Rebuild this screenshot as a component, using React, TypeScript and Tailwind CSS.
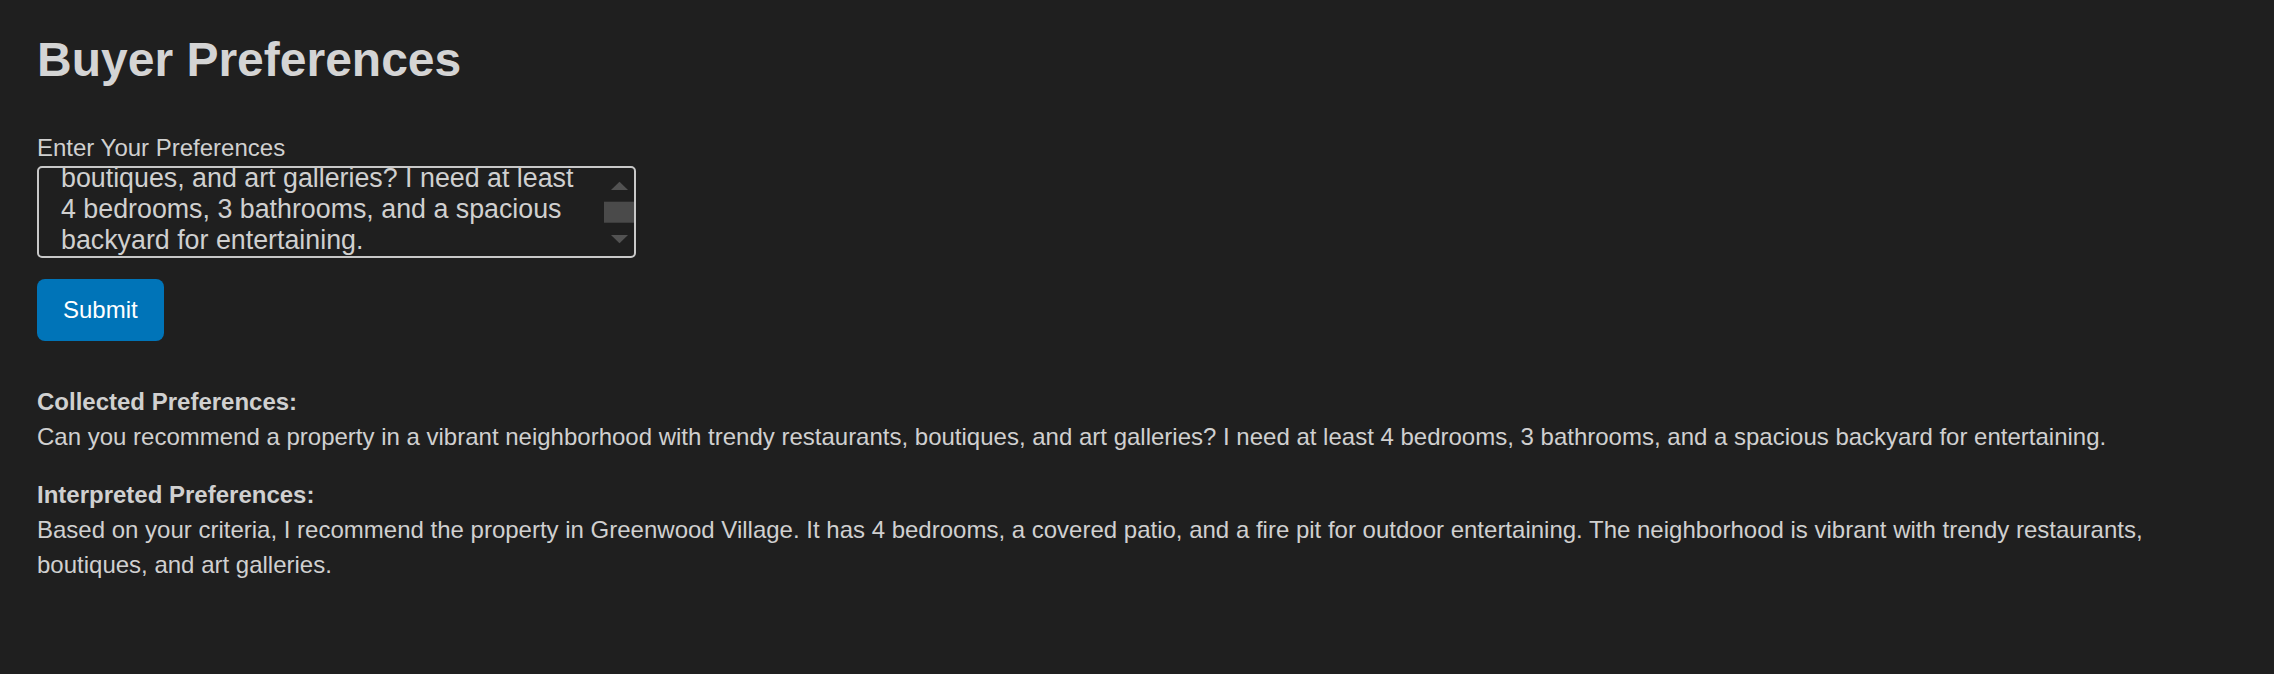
import React, { useLayoutEffect, useRef } from "react";

const collected =
  "Can you recommend a property in a vibrant neighborhood with trendy restaurants, boutiques, and art galleries? I need at least 4 bedrooms, 3 bathrooms, and a spacious backyard for entertaining.";
const interpreted =
  "Based on your criteria, I recommend the property in Greenwood Village. It has 4 bedrooms, a covered patio, and a fire pit for outdoor entertaining. The neighborhood is vibrant with trendy restaurants, boutiques, and art galleries.";

function FakeScrollbar() {
  return (
    <svg width="30" height="88" viewBox="0 0 30 88" className="shrink-0 block">
      <polygon points="7,22 24,22 15.5,13.7" fill="#525252" />
      <rect x="0" y="33.7" width="30" height="21" fill="#4a4a4a" />
      <polygon points="7,67 24,67 15.5,75.3" fill="#525252" />
    </svg>
  );
}

export default function App() {
  const ref = useRef<HTMLTextAreaElement>(null);
  useLayoutEffect(() => {
    if (ref.current) ref.current.scrollTop = ref.current.scrollHeight;
  }, []);

  return (
    <div
      className="min-h-screen w-full bg-[#1f1f1f] text-[#d0d0d0] px-[37px] pt-[32px]"
      style={{ fontFamily: '"Liberation Sans", Arial, sans-serif' }}
    >
      <h1 className="text-[48px] leading-[56px] font-bold text-[#d4d4d4]">Buyer Preferences</h1>

      <label className="block mt-[46px] text-[24px] leading-[28px] text-[#d0d0d0]">
        Enter Your Preferences
      </label>

      <div className="mt-[4px] flex w-[599px] h-[92px] border-2 border-[#c8c8c8] rounded-[5px] overflow-hidden">
        <textarea
          ref={ref}
          readOnly
          defaultValue={collected}
          className="flex-1 min-w-0 h-full bg-transparent border-0 outline-none resize-none overflow-hidden pl-[22px] pr-[12px] py-0 text-[26.8px] leading-[31px] text-[#d0d0d0]"
          style={{ fontFamily: '"Liberation Sans", Arial, sans-serif' }}
        />
        <FakeScrollbar />
      </div>

      <button className="mt-[21px] h-[62px] px-[26px] flex items-center rounded-[8px] bg-[#0074b8] text-white text-[24px] leading-[28px]">
        Submit
      </button>

      <div className="mt-[43px] text-[24px] leading-[35px]">
        <p>
          <span className="block font-bold">Collected Preferences:</span>
          <span className="block">{collected}</span>
        </p>
        <p className="mt-[23px]">
          <span className="block font-bold">Interpreted Preferences:</span>
          <span className="block">{interpreted}</span>
        </p>
      </div>
    </div>
  );
}
